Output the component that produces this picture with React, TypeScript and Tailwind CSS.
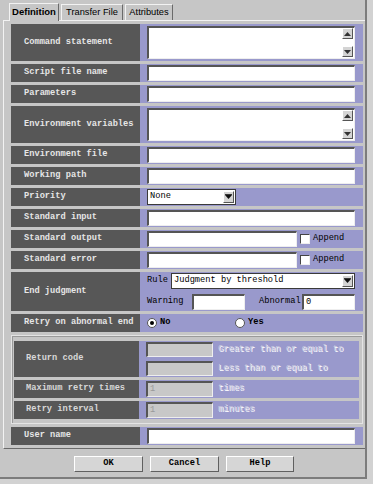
import React from 'react';

const mono = { fontFamily: '"Liberation Mono", "DejaVu Sans Mono", monospace' };

function Label({ text, dim }: { text: string; dim?: boolean }) {
  return (
    <div
      className={`shrink-0 bg-[#575757] flex items-center text-[8.7px] font-bold ${
        dim ? 'w-[125px] pl-[12px] text-[#d8d8d8]' : 'w-[129px] pl-[13px] text-[#e6e6e6]'
      }`}
    >
      {text}
    </div>
  );
}

function TextBox({ className = '', value = '', disabled }: { className?: string; value?: string; disabled?: boolean }) {
  return (
    <div
      className={`h-[16px] border-t-2 border-l-2 border-t-[#555555] border-l-[#555555] border-b border-r border-b-[#eeeeee] border-r-[#eeeeee] flex items-center pl-[2px] text-[8.7px] ${
        disabled ? 'bg-[#c8c8c8] text-[#9a9a9a]' : 'bg-white text-black'
      } ${className}`}
    >
      {value}
    </div>
  );
}

function ArrowBtn({ up }: { up?: boolean }) {
  return (
    <div className="w-[11px] h-[11px] bg-[#d4d4d4] border-t border-l border-t-white border-l-white border-b border-r border-b-[#555555] border-r-[#555555] flex items-center justify-center">
      <svg width="7" height="4" viewBox="0 0 7 4">
        {up ? <path d="M0 4 L3.5 0 L7 4 Z" fill="#333" /> : <path d="M0 0 L3.5 4 L7 0 Z" fill="#333" />}
      </svg>
    </div>
  );
}

function TextArea() {
  return (
    <div className="relative w-[208px] h-[33px] bg-white border-t-2 border-l-2 border-t-[#555555] border-l-[#555555] border-b border-r border-b-[#eeeeee] border-r-[#eeeeee]">
      <div className="absolute right-[1px] top-[0px]">
        <ArrowBtn up />
      </div>
      <div className="absolute right-[1px] bottom-[1px]">
        <ArrowBtn />
      </div>
    </div>
  );
}

function Select({ value, className }: { value: string; className: string }) {
  return (
    <div
      className={`h-[16px] bg-white border border-[#3a3a3a] flex items-center justify-between pl-[2px] pr-[1px] text-[8.7px] text-black ${className}`}
    >
      <span>{value}</span>
      <div className="w-[11px] h-[12px] bg-[#d4d4d4] border-t border-l border-t-white border-l-white border-b border-r border-b-[#555555] border-r-[#555555] flex items-center justify-center">
        <svg width="7" height="6" viewBox="0 0 7 6">
          <path d="M0 1 L3.5 5 L7 1 Z" fill="#111" />
          <rect x="0" y="0" width="7" height="0.8" fill="#111" />
        </svg>
      </div>
    </div>
  );
}

function Check() {
  return (
    <div className="w-[10px] h-[10px] bg-white border-t border-l border-t-[#444444] border-l-[#444444] border-b border-r border-b-[#eeeeee] border-r-[#eeeeee]" />
  );
}

function Radio({ checked }: { checked?: boolean }) {
  return (
    <div className="w-[10px] h-[10px] rounded-full bg-white border border-[#555555] flex items-center justify-center">
      {checked && <div className="w-[4px] h-[4px] rounded-full bg-black" />}
    </div>
  );
}

function Button({ text, w }: { text: string; w: string }) {
  return (
    <div
      className={`${w} h-[16px] bg-[#d6d6d6] border-t border-l border-t-white border-l-white border-b border-r border-b-[#606060] border-r-[#606060] flex items-center justify-center text-[8.7px] font-bold text-black`}
    >
      {text}
    </div>
  );
}

const dimText = 'text-[#c8c8de] [text-shadow:1px_1px_0_#ffffff]';

export default function App() {
  return (
    <div className="w-[373px] h-[484px] bg-[#d2d2d2]" style={mono}>
      <div className="w-[367px] h-[479px] bg-[#c6c6c6] border-r-2 border-b-2 border-r-[#7c7c7c] border-b-[#7c7c7c] flex flex-col">
        {/* Tabs */}
        <div className="h-[20px] flex items-end pl-[9px] gap-[2px] shrink-0" style={{ fontFamily: '"Liberation Sans", Arial, sans-serif' }}>
          <div className="h-[18px] w-[50px] bg-[#c6c6c6] border-t border-l border-t-[#f2f2f2] border-l-[#f2f2f2] border-r border-r-[#6a6a6a] flex items-center justify-center text-[9.5px] font-bold text-black -mb-[1px] relative z-10">
            Definition
          </div>
          <div className="h-[16px] w-[62px] bg-[#c6c6c6] border-t border-l border-t-[#f2f2f2] border-l-[#f2f2f2] border-r border-r-[#6a6a6a] flex items-center justify-center text-[9.3px] text-black">
            Transfer File
          </div>
          <div className="h-[16px] w-[48px] bg-[#c6c6c6] border-t border-l border-t-[#f2f2f2] border-l-[#f2f2f2] border-r border-r-[#6a6a6a] flex items-center justify-center text-[9.3px] text-black">
            Attributes
          </div>
        </div>

        {/* Panel */}
        <div className="ml-[3px] h-[429px] border-t border-l border-t-[#f2f2f2] border-l-[#f2f2f2] border-b border-b-[#6a6a6a] pl-[7px] pt-[3px] shrink-0">
          <div className="w-[352px] flex flex-col gap-[3px]">
            <div className="flex h-[37px]">
              <Label text="Command statement" />
              <div className="flex-1 bg-[#9999cc] flex items-center pl-[7px]">
                <TextArea />
              </div>
            </div>
            <div className="flex h-[18px]">
              <Label text="Script file name" />
              <div className="flex-1 bg-[#9999cc] flex items-center pl-[7px] pr-[8px]">
                <TextBox className="w-full" />
              </div>
            </div>
            <div className="flex h-[18px]">
              <Label text="Parameters" />
              <div className="flex-1 bg-[#9999cc] flex items-center pl-[7px] pr-[8px]">
                <TextBox className="w-full" />
              </div>
            </div>
            <div className="flex h-[37px]">
              <Label text="Environment variables" />
              <div className="flex-1 bg-[#9999cc] flex items-center pl-[7px]">
                <TextArea />
              </div>
            </div>
            <div className="flex h-[18px]">
              <Label text="Environment file" />
              <div className="flex-1 bg-[#9999cc] flex items-center pl-[7px] pr-[8px]">
                <TextBox className="w-full" />
              </div>
            </div>
            <div className="flex h-[18px]">
              <Label text="Working path" />
              <div className="flex-1 bg-[#9999cc] flex items-center pl-[7px] pr-[8px]">
                <TextBox className="w-full" />
              </div>
            </div>
            <div className="flex h-[18px]">
              <Label text="Priority" />
              <div className="flex-1 bg-[#9999cc] flex items-center pl-[7px]">
                <Select value="None" className="w-[89px]" />
              </div>
            </div>
            <div className="flex h-[18px]">
              <Label text="Standard input" />
              <div className="flex-1 bg-[#9999cc] flex items-center pl-[7px] pr-[8px]">
                <TextBox className="w-full" />
              </div>
            </div>
            <div className="flex h-[18px]">
              <Label text="Standard output" />
              <div className="flex-1 bg-[#9999cc] flex items-center pl-[7px] text-[8.7px] text-black">
                <TextBox className="w-[150px]" />
                <div className="ml-[3px]">
                  <Check />
                </div>
                <span className="ml-[3px]">Append</span>
              </div>
            </div>
            <div className="flex h-[18px]">
              <Label text="Standard error" />
              <div className="flex-1 bg-[#9999cc] flex items-center pl-[7px] text-[8.7px] text-black">
                <TextBox className="w-[150px]" />
                <div className="ml-[3px]">
                  <Check />
                </div>
                <span className="ml-[3px]">Append</span>
              </div>
            </div>
            <div className="flex h-[39px]">
              <Label text="End judgment" />
              <div className="flex-1 bg-[#9999cc] flex flex-col justify-center gap-[5px] pl-[7px] pr-[8px] text-[8.7px] text-black">
                <div className="flex items-center">
                  <span className="w-[24px]">Rule</span>
                  <Select value="Judgment by threshold" className="flex-1" />
                </div>
                <div className="flex items-center">
                  <span className="w-[45px]">Warning</span>
                  <TextBox className="w-[53px]" />
                  <span className="ml-[14px] w-[43px]">Abnormal</span>
                  <TextBox className="flex-1" value="0" />
                </div>
              </div>
            </div>
            <div className="flex h-[18px]">
              <Label text="Retry on abnormal end" />
              <div className="flex-1 bg-[#9999cc] flex items-center pl-[7px] text-[8.7px] text-black font-bold">
                <div className="w-[88px] flex items-center gap-[3px]">
                  <Radio checked />
                  <span>No</span>
                </div>
                <div className="flex items-center gap-[3px]">
                  <Radio />
                  <span>Yes</span>
                </div>
              </div>
            </div>

            {/* Disabled group */}
            <div className="h-[89px] border border-[#e4e4e4] shadow-[inset_1px_1px_0_#9a9a9a] pl-[2px] pr-[3px] pt-[5px] flex flex-col gap-[3px]">
              <div className="flex h-[36px]">
                <Label text="Return code" dim />
                <div className="flex-1 bg-[#9999cc] flex flex-col justify-center gap-[4px] pl-[7px] text-[8.7px]">
                  <div className="flex items-center">
                    <TextBox className="w-[67px] !h-[15px]" disabled />
                    <span className={`ml-[5px] ${dimText}`}>Greater than or equal to</span>
                  </div>
                  <div className="flex items-center">
                    <TextBox className="w-[67px] !h-[15px]" disabled />
                    <span className={`ml-[5px] ${dimText}`}>Less than or equal to</span>
                  </div>
                </div>
              </div>
              <div className="flex h-[18px]">
                <Label text="Maximum retry times" dim />
                <div className="flex-1 bg-[#9999cc] flex items-center pl-[7px] text-[8.7px]">
                  <TextBox className="w-[67px]" value="1" disabled />
                  <span className={`ml-[5px] ${dimText}`}>times</span>
                </div>
              </div>
              <div className="flex h-[18px]">
                <Label text="Retry interval" dim />
                <div className="flex-1 bg-[#9999cc] flex items-center pl-[7px] text-[8.7px]">
                  <TextBox className="w-[67px]" value="1" disabled />
                  <span className={`ml-[5px] ${dimText}`}>minutes</span>
                </div>
              </div>
            </div>

            <div className="flex h-[18px]">
              <Label text="User name" />
              <div className="flex-1 bg-[#9999cc] flex items-center pl-[7px] pr-[8px]">
                <TextBox className="w-full" />
              </div>
            </div>
          </div>
        </div>

        {/* Buttons */}
        <div className="flex justify-center gap-[7px] mt-[7px] pl-[3px]">
          <Button text="OK" w="w-[69px]" />
          <Button text="Cancel" w="w-[69px]" />
          <Button text="Help" w="w-[68px]" />
        </div>
      </div>
    </div>
  );
}
